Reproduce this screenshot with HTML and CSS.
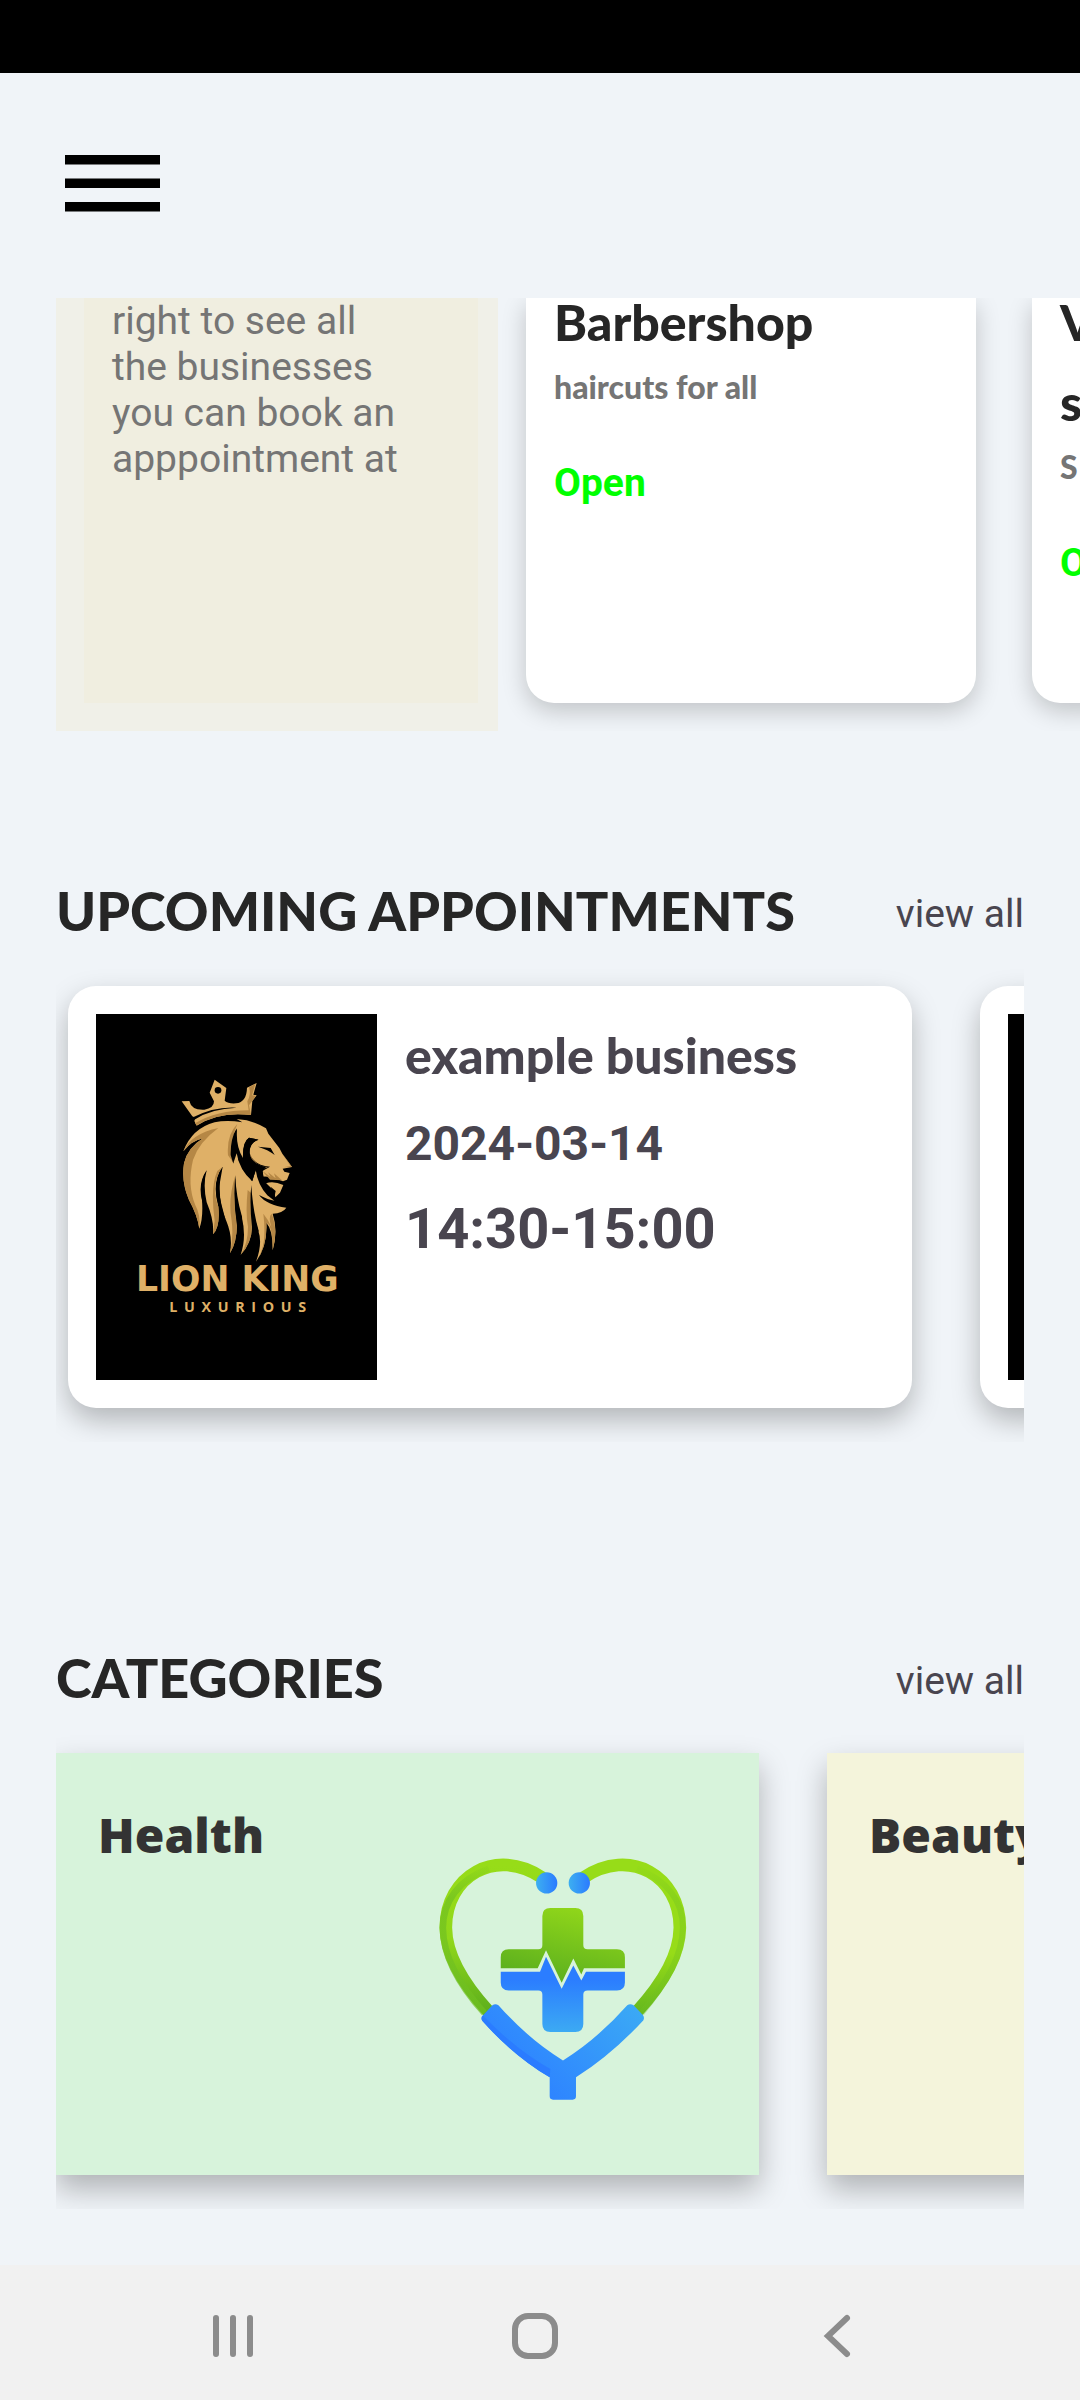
FILE: index.html
```html
<!DOCTYPE html>
<html lang="en">
<head>
<meta charset="utf-8">
<meta name="viewport" content="width=device-width, initial-scale=1">
<title>Appointments</title>
<link rel="stylesheet" href="styles.css">
</head>
<body>
<div class="app">
  <div class="status-bar"></div>
  <header class="top-bar">
    <button class="icon-button" type="button" aria-label="Menu">
      <svg class="menu-icon" viewBox="0 0 96 58"><path d="M0 0h95v9.500H0zM0 23.500h95v9.500H0zM0 47h95v9.500H0z"/></svg>
    </button>
  </header>

  <main class="content">
    <section class="business-list" aria-label="Businesses">
      <div class="hint-card"><p class="hint-text">right to see all the businesses you can book an apppointment at</p></div>
      <article class="business-card">
        <h3 class="business-name">Barbershop</h3>
        <p class="business-about">haircuts for all</p>
        <p class="business-state">Open</p>
      </article>
      <article class="business-card">
        <h3 class="business-name">V<br>s</h3>
        <p class="business-about">S</p>
        <p class="business-state">O</p>
      </article>
    </section>

    <section class="section">
      <div class="section-head">
        <h2 class="section-title">UPCOMING APPOINTMENTS</h2>
        <a class="view-all" href="#appointments">view all</a>
      </div>
      <div class="appointment-list" id="appointments">
        <article class="appointment-card">
          <svg class="logo" viewBox="-42 -138 843 1098" role="img" aria-label="Lion King Luxurious">
            <g class="gold">
              <path d="M215 124L238 123Q244 151 283 149Q312 145 312 124L299 98L314 59L349 84L344 122Q355 132 378 130Q410 126 411 83L440 69L430 104L440 106L427 123L423 165Q328 153 260 197L253 183L256 173L247 169Z"/>
              <path d="M220 274Q246 205 314 187Q350 179 397 187L380 177Q430 180 468 205L475 221L508 264L517 281L546 321L518 326L523 335L539 339L531 359L519 364Q478 348 460 350L457 333L480 320Q430 315 419 280Q415 250 445 239L417 233Q398 245 399 294Q377 260 381 206Q360 235 370 310L380 280Q388 330 427 364L437 329Q443 373 472 406L493 422Q476 420 447 405Q470 436 529 443Q518 460 488 461Q505 512 488 571Q489 510 469 488Q473 558 438 605Q459 550 444 509Q428 460 424 400Q424 450 426 500Q425 549 392 584Q411 530 394 467Q372 420 376 346Q370 430 381 496Q380 548 360 580Q369 530 349 483Q325 430 330 366L338 320Q304 365 325 440Q331 500 309 523Q313 482 290 427Q278 375 290 331Q263 370 276 420Q280 474 268 506Q262 465 237 420Q213 364 222 310Q233 263 279 235Q245 242 220 274Z"/>
              <path d="M468 370Q490 362 520 375L510 398L496 412L492 393Z"/>
            </g>
            <g class="bronze">
              <path d="M436 72L426 106L438 107L417 136L423 165Q330 153 260 196L255 190Q320 151 416 151L412 124Q424 104 417 82Z"/>
              <path d="M220 274Q244 221 325 204Q266 247 249 300Q231 375 256 436Q272 464 268 506Q262 465 237 420Q213 364 222 310Q233 263 279 235Q245 242 220 274Z"/>
              <path d="M338 320Q300 370 325 440Q331 500 309 523L314 482Q300 380 322 333ZM376 346Q370 430 381 496Q380 548 360 580Q371 530 365 482Q353 420 376 346ZM413 390Q406 460 414 500Q414 551 392 584Q425 549 426 500Q419 440 424 400ZM460 461Q465 500 462 540Q457 578 438 605Q473 558 469 488L478 495Q489 523 488 571Q505 512 485 461Q474 469 484 501Q475 479 460 461Z"/>
              <path d="M382 192Q349 225 354 286L370 308Q360 240 382 192M475 321Q434 321 419 280Q419 318 457 328M517 281L546 321L520 322L541 318ZM457 333L482 351L474 337L497 355L492 340L516 361L480 359Z"/>
            </g>
            <g class="ink">
              <circle cx="324" cy="91" r="10"/>
              <path d="M244 174Q312 139 380 143Q302 146 253 179Z"/>
              <path d="M444 260L482 264L494 285Q474 269 444 260ZM380 205L370 311L362 285Q361 237 380 205Z"/>
              <path d="M399 294Q397 245 417 233L446 239Q418 247 419 280Q423 310 468 321L458 333L460 348L468 370L492 393L494 413L474 400L438 330L426 364L384 298Z"/>
              <path d="M482 380L497 393L494 407L487 394Z"/>
              <path d="M290 331Q272 372 285 425L292 470Q282 440 276 420Q266 370 290 331ZM338 320Q318 372 334 432L346 478Q328 452 322 420Q310 365 338 320ZM376 346Q378 410 396 470L398 500L381 496Q369 420 376 346ZM424 375Q428 450 446 512L440 530L426 500Q418 430 424 375Z"/>
            </g>
            <text class="logo-name" x="382" y="692" text-anchor="middle">LION KING</text>
            <text class="logo-tag" x="393" y="755" text-anchor="middle">LUXURIOUS</text>
          </svg>
          <div class="appointment-info">
            <h3 class="appointment-name">example business</h3>
            <time class="appointment-date">2024-03-14</time>
            <p class="appointment-time">14:30-15:00</p>
          </div>
        </article>
        <article class="appointment-card"><div class="logo logo-blank"></div></article>
      </div>
    </section>

    <section class="section categories">
      <div class="section-head">
        <h2 class="section-title">CATEGORIES</h2>
        <a class="view-all" href="#categories">view all</a>
      </div>
      <div class="category-list" id="categories">
        <article class="category-card health">
          <h3 class="category-name">Health</h3>
          <svg class="health-icon" viewBox="50 80 756 730" aria-hidden="true">
            <defs>
              <linearGradient id="tubeLeft" x1="0" y1="0" x2="0" y2="1"><stop offset="0" stop-color="#97dc18"/><stop offset=".5" stop-color="#91d81a"/><stop offset="1" stop-color="#5eaf1d"/></linearGradient>
              <linearGradient id="tubeRight" x1="0" y1="0" x2="0" y2="1"><stop offset=".6" stop-color="#97dc18"/><stop offset="1" stop-color="#66b81d"/></linearGradient>
              <linearGradient id="tubeShade" gradientUnits="userSpaceOnUse" x1="0" y1="90" x2="0" y2="200"><stop offset="0" stop-color="#70c021" stop-opacity="0"/><stop offset="1" stop-color="#70c021"/></linearGradient>
              <linearGradient id="crossTop" gradientUnits="userSpaceOnUse" x1="440" y1="230" x2="390" y2="450"><stop offset="0" stop-color="#8fd51a"/><stop offset="1" stop-color="#5cb01e"/></linearGradient>
              <linearGradient id="crossBottom" x1="0" y1="0" x2="0" y2="1"><stop offset=".3" stop-color="#2b7dff"/><stop offset="1" stop-color="#3caaf3"/></linearGradient>
              <linearGradient id="sleeve" gradientUnits="userSpaceOnUse" x1="660" y1="540" x2="400" y2="800"><stop offset="0" stop-color="#3ba9f5"/><stop offset="1" stop-color="#2e85ff"/></linearGradient>
              <linearGradient id="bud" x1="0" y1="0" x2="1" y2="0"><stop offset="0" stop-color="#3daff0"/><stop offset="1" stop-color="#2b7bff"/></linearGradient>
            </defs>
            <g fill="none" stroke-width="38">
              <path stroke="url(#tubeLeft)" d="M366 139C225 45 75 135 76 290C77 375 130 460 205 542"/>
              <path stroke="url(#tubeRight)" d="M489 139C630 45 780 135 779 290C778 375 725 460 650 542"/>
              <path stroke="url(#tubeShade)" stroke-width="20" opacity=".7" d="M205 112C115 145 67 210 67 290C68 380 120 466 192 546"/>
              <path stroke="url(#tubeShade)" stroke-width="18" opacity=".35" d="M650 112C740 145 789 210 788 290C787 375 738 455 664 546"/>
            </g>
            <path fill="url(#sleeve)" d="M216 522Q225 516 234 522Q325 625 428 688Q530 625 621 522Q630 516 640 522L668 552Q674 560 669 568Q575 670 467 739V796Q467 806 457 806H398Q388 806 388 796V739Q280 675 186 570Q180 560 187 553Z"/>
            <path fill="#2b7cff" d="M187 553Q285 655 390 714L388 739Q280 675 186 570Q180 560 187 553Z"/>
            <path fill="url(#crossTop)" d="M241 411V378Q241 354 265 354H354Q366 354 366 341V254Q366 230 390 230H465Q489 230 489 254V341Q489 354 502 354H590Q614 354 614 378V411H491L483 430L459 382L424 455L377 357L352 411Z"/>
            <path fill="url(#crossBottom)" d="M241 422H359L377 377L424 473L459 403L483 448L497 422H614V454Q614 478 590 478H502Q489 478 489 490V579Q489 603 465 603H390Q366 603 366 579V490Q366 478 354 478H265Q241 478 241 454Z"/>
            <circle cx="379" cy="155" r="32" fill="url(#bud)"/>
            <circle cx="477" cy="155" r="32" fill="url(#bud)"/>
          </svg>
        </article>
        <article class="category-card beauty"><h3 class="category-name">Beauty</h3></article>
      </div>
    </section>
  </main>

  <nav class="nav-bar" aria-label="System">
    <button class="nav-button" type="button" aria-label="Recent apps"><svg class="nav-icon" viewBox="0 0 48 48"><path d="M7 6v36M24 6v36M41 6v36"/></svg></button>
    <button class="nav-button" type="button" aria-label="Home"><svg class="nav-icon" viewBox="0 0 48 48"><rect x="4" y="4" width="40" height="40" rx="13"/></svg></button>
    <button class="nav-button" type="button" aria-label="Back"><svg class="nav-icon" viewBox="0 0 48 48"><path d="M34 6L15 24L34 42"/></svg></button>
  </nav>
</div>
</body>
</html>
```
FILE: styles.css
```css
* { box-sizing: border-box; }

body {
  margin: 0;
  background: #f0f4f8;
  color: #262626;
  font-family: Roboto, "Liberation Sans", sans-serif;
  font-size: 39px;
  line-height: 46px;
}

h2, h3, p { margin: 0; }
button { border: 0; padding: 0; background: none; }
svg { display: block; }

.app {
  min-height: 100vh;
  display: flex;
  flex-direction: column;
  overflow: hidden;
}

.status-bar { height: 73px; background: #000; }

.top-bar { padding: 82px 65px 85px; }
.icon-button { display: block; }
.menu-icon { width: 96px; height: 58px; }

.content { padding-left: 56px; }

/* Businesses */
.business-list {
  display: flex;
  overflow: hidden;
  padding-bottom: 28px;
}

.hint-card {
  flex: none;
  width: 442px;
  margin: 0 28px -28px 0;
  border: solid #f0f0e8;
  border-width: 0 20px 28px 28px;
  background: #f0eee0;
  padding: 0 72px 0 28px;
}
.hint-text { color: #757575; }

.business-card {
  flex: none;
  width: 450px;
  height: 405px;
  margin-right: 56px;
  padding: 0 28px;
  border-radius: 0 0 28px 28px;
  background: #fff;
  box-shadow: 0 8px 24px rgba(0, 0, 0, .2);
}
.business-name {
  font: 900 50px/80px Lato, sans-serif;
  margin-top: -16px;
}
.business-about {
  font: 900 32px/50px Lato, sans-serif;
  color: #757575;
}
.business-state {
  margin-top: 48px;
  font-weight: 700;
  color: #0f0;
}

/* Section headings */
.section { margin-right: 56px; }
.categories { padding-top: 56px; }
.section-head {
  display: flex;
  justify-content: space-between;
  align-items: center;
  padding-top: 144px;
}
.section-title { font: 900 54px/72px Lato, sans-serif; }
.view-all { padding-top: 6px; color: #49454f; text-decoration: none; }

/* Appointments */
.appointment-list {
  display: flex;
  gap: 68px;
  overflow: hidden;
  padding: 39px 0 34px 12px;
}
.appointment-card {
  flex: none;
  display: flex;
  gap: 28px;
  width: 844px;
  padding: 28px;
  border-radius: 28px;
  background: #fff;
  box-shadow: 0 12px 28px rgba(0, 0, 0, .26);
}
.logo { flex: none; width: 281px; height: 366px; background: #000; }
.gold, .logo-name, .logo-tag { fill: #dfb067; }
.bronze { fill: #b58745; }
.logo-name { font: 700 104px "DejaVu Sans", sans-serif; }
.logo-tag { font: 700 43px "Open Sans", sans-serif; letter-spacing: 20px; }

.appointment-info { color: #49454f; font-weight: 700; padding-top: 4px; }
.appointment-name { font: 900 50px/74px Lato, sans-serif; }
.appointment-date { display: block; font-size: 48px; line-height: 104px; }
.appointment-time { font-size: 56px; line-height: 66px; }

/* Categories */
.category-list {
  display: flex;
  gap: 68px;
  overflow: hidden;
  padding: 39px 0 34px;
}
.category-card {
  flex: none;
  display: flex;
  justify-content: space-between;
  width: 703px;
  height: 422px;
  padding: 42px 70px 74px 42px;
  box-shadow: 0 14px 28px rgba(0, 0, 0, .27);
}
.health { background: #d7f3db; }
.beauty { background: #f4f4db; }
.category-name { font: 800 48px/80px "Open Sans", sans-serif; color: #333; }
.health-icon { width: 252px; height: 243px; align-self: flex-end; }

/* System navigation */
.nav-bar {
  display: flex;
  justify-content: space-between;
  margin-top: auto;
  padding: 47px 219px 40px 209px;
  background: #f1f1f1;
}
.nav-button { display: block; }
.nav-icon {
  width: 48px;
  height: 48px;
  fill: none;
  stroke: #8c8c8c;
  stroke-width: 6;
  stroke-linecap: round;
}
```
